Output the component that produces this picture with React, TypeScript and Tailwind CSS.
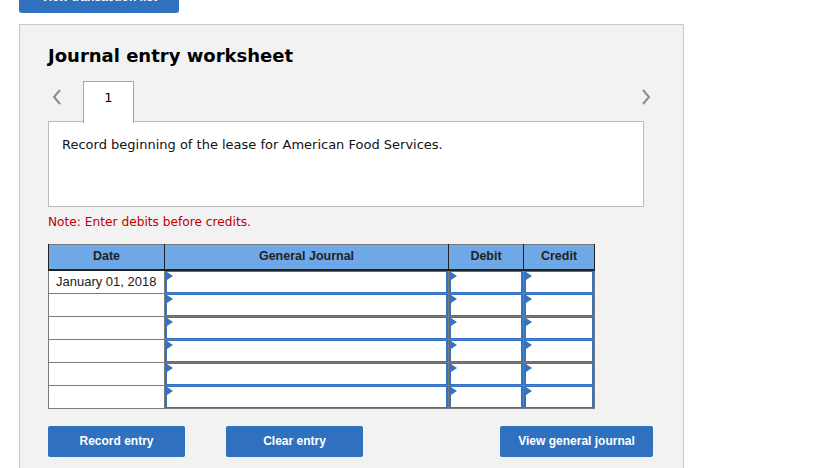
import React from 'react';

const verdana = { fontFamily: '"DejaVu Sans", Verdana, sans-serif' };
const arial = { fontFamily: '"Liberation Sans", Arial, sans-serif' };

const InputCell: React.FC = () => (
  <td className="border border-[#7a7a7a] p-0 h-[23px]">
    <div className="relative h-[22px] bg-white border-x-2 border-y border-[#3573c0]">
      <span className="absolute top-0 left-0 w-0 h-0 border-y-[4px] border-y-transparent border-l-[6px] border-l-[#3573c0]" />
    </div>
  </td>
);

const Chevron: React.FC<{ dir: 'left' | 'right' }> = ({ dir }) => (
  <svg width="10" height="16" viewBox="0 0 10 16" className="block">
    <polyline
      points={dir === 'left' ? '8,1 2,8 8,15' : '2,1 8,8 2,15'}
      fill="none"
      stroke="#8c8c8c"
      strokeWidth="2"
    />
  </svg>
);

const App: React.FC = () => {
  const rows = ['January 01, 2018', '', '', '', '', ''];

  return (
    <div className="w-[825px] h-[468px] bg-white overflow-hidden">
      <button
        className="block mt-[-20px] ml-[19px] w-[160px] h-[33px] rounded-[3px] bg-[#2f70bf] text-white text-[12px] font-bold"
        style={arial}
      >
        View transaction list
      </button>

      <div className="mt-[11px] ml-[19px] w-[665px] h-[500px] border border-[#c8c8c8] bg-[#f2f2f2] pl-[28px] pt-[20px]" style={verdana}>
        <h2 className="text-[18px] leading-[22px] font-bold text-black">Journal entry worksheet</h2>

        <div className="mt-[14px] w-[603px] flex items-start justify-between">
          <div className="flex items-start">
            <div className="ml-[4px] mt-[8px]">
              <Chevron dir="left" />
            </div>
            <div className="ml-[21px] w-[51px] h-[42px] bg-white border-x border-t border-[#a6a6a6] relative z-10 -mb-px flex justify-center pt-[6px] text-[13px] text-black">
              1
            </div>
          </div>
          <div className="mt-[8px]">
            <Chevron dir="right" />
          </div>
        </div>

        <div className="w-[596px] h-[86px] bg-white border border-[#bcbcbc] -mt-px pl-[13px] pt-[15px] text-[13px] leading-[16px] text-[#111]">
          Record beginning of the lease for American Food Services.
        </div>

        <p className="mt-[7px] text-[12.2px] leading-[16px] text-[#c00000]">Note: Enter debits before credits.</p>

        <table className="mt-[14px] w-[546px] table-fixed border-collapse border border-[#7a7a7a]" style={arial}>
          <colgroup>
            <col className="w-[116px]" />
            <col className="w-[284px]" />
            <col className="w-[75px]" />
            <col className="w-[71px]" />
          </colgroup>
          <thead>
            <tr className="h-[25px] bg-[#6fa8e6] text-[12.5px] font-bold text-[#222]">
              <th className="border-x border-[#222] border-b-2 border-b-[#222] font-bold">Date</th>
              <th className="border-x border-[#222] border-b-2 border-b-[#222] font-bold">General Journal</th>
              <th className="border-x border-[#222] border-b-2 border-b-[#222] font-bold">Debit</th>
              <th className="border-x border-[#222] border-b-2 border-b-[#222] font-bold">Credit</th>
            </tr>
          </thead>
          <tbody>
            {rows.map((d, i) => (
              <tr key={i}>
                <td className="border border-[#7a7a7a] bg-white h-[23px] px-[7px] text-[13px] text-[#222] whitespace-nowrap">{d}</td>
                <InputCell />
                <InputCell />
                <InputCell />
              </tr>
            ))}
          </tbody>
        </table>

        <div className="mt-[17px] flex text-white text-[12px] font-bold" style={arial}>
          <button className="w-[137px] h-[31px] rounded-[2px] bg-[#2f70bf]">Record entry</button>
          <button className="ml-[41px] w-[137px] h-[31px] rounded-[2px] bg-[#2f70bf]">Clear entry</button>
          <button className="ml-[137px] w-[153px] h-[31px] rounded-[2px] bg-[#2f70bf]">View general journal</button>
        </div>
      </div>
    </div>
  );
};

export default App;
